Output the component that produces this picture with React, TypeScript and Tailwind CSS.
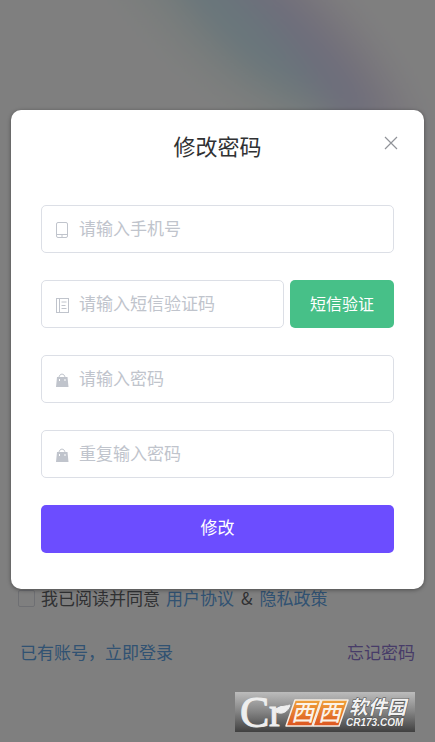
import type { ReactNode } from "react";

const PhoneIcon = () => (
  <svg width="14" height="18" viewBox="0 0 14 18" fill="none" stroke="currentColor">
    <rect x="1.5" y="1.5" width="11" height="15" rx="1.5" />
    <path d="M1.5 13.5h11M7 13.5v3" />
  </svg>
);

const NotebookIcon = () => (
  <svg width="14" height="18" viewBox="0 0 14 18" fill="none" stroke="currentColor">
    <rect x="1.5" y="2.5" width="12" height="14" />
    <path d="M4.5 2.5v14M6.5 6h5M6.5 9.5h4M6.5 12.5h5" />
  </svg>
);

const BagIcon = () => (
  <svg width="14" height="18" viewBox="0 0 14 18" fill="none">
    <path d="M4 7C4 1.8 10 1.8 10 7" stroke="currentColor" />
    <path
      fillRule="evenodd"
      d="M2 6h10.5l1 10H1zM4 8v2h1V8zM9.500 8v2h1V8z"
      fill="currentColor"
    />
  </svg>
);

// Text box with a leading icon
const Field = ({
  label,
  type = "text",
  icon,
}: {
  label: string;
  type?: string;
  icon: ReactNode;
}) => (
  <label className="flex h-12 w-full min-w-0 items-center gap-2.5 rounded-[5px] border border-[#dcdfe6] bg-white px-[13px] text-[#c0c4cc]">
    <span className="pt-0.5">{icon}</span>
    <input
      type={type}
      aria-label={label}
      placeholder={label}
      className="h-full min-w-0 flex-1 bg-transparent pb-1 text-[17px] text-[#606266] outline-none placeholder:text-[#c0c4cc]"
    />
  </label>
);

// Soft coloured band in the top corner of the login page
const Glow = () => (
  <svg
    className="absolute top-0 right-0"
    width="435"
    height="300"
    viewBox="0 0 435 300"
    fill="none"
    aria-hidden="true"
  >
    <defs>
      <filter id="glow" x="-50%" y="-50%" width="200%" height="200%">
        <feGaussianBlur stdDeviation="17" />
      </filter>
    </defs>
    <g filter="url(#glow)">
      <path d="M110 -60C190 20 230 100 350 110" stroke="#f2faf8" strokeWidth="50" />
      <path d="M160 -70C220 10 250 60 340 90" stroke="#d2ecf6" strokeWidth="50" />
      <path d="M215 -70C275 0 325 40 365 130" stroke="#dadaf6" strokeWidth="46" />
      <path d="M250 -60C320 10 370 50 405 140" stroke="#f0e8f6" strokeWidth="28" />
    </g>
  </svg>
);

const Watermark = () => (
  <svg
    className="absolute right-5 bottom-2.5 overflow-visible"
    width="180"
    height="40"
    viewBox="0 0 180 40"
    role="img"
    aria-label="西西软件园 CR173.COM"
  >
    <defs>
      <linearGradient id="plate" x1="0" y1="0" x2="0" y2="1">
        <stop offset="0" stopColor="#bcbcbc" />
        <stop offset="0.5" stopColor="#838383" />
        <stop offset="1" stopColor="#404040" />
      </linearGradient>
      <linearGradient id="tile" x1="0" y1="0" x2="0" y2="1">
        <stop offset="0" stopColor="#f0a33a" />
        <stop offset="1" stopColor="#dc5420" />
      </linearGradient>
    </defs>
    <rect width="180" height="40" fill="url(#plate)" />
    <g fill="#eeeeee" stroke="#eeeeee" strokeWidth="1">
      <text x="5" y="35" fontSize="44" fontFamily="'Liberation Serif', serif">
        C
      </text>
      <text x="34" y="34" fontSize="42" fontFamily="'Liberation Serif', serif">
        r
      </text>
      <path d="M41 20C42 14 48 15 55 13C53 20 47 23 41 20z" />
    </g>
    <g fill="url(#tile)" stroke="#f5eee6" strokeWidth="1.5" strokeLinejoin="round">
      <path d="M60 8H86L77 34H51z" />
      <path d="M87 8H113L104 34H78z" />
    </g>
    <text
      fill="#fbf3e8"
      fontSize="23"
      fontWeight="500"
      fontStyle="italic"
      fontFamily="'Noto Sans CJK SC', sans-serif"
      y="29"
    >
      <tspan x="56">西</tspan>
      <tspan x="83">西</tspan>
    </text>
    <g
      fill="#f2f2f2"
      stroke="#4c4c4c"
      strokeWidth="1"
      paintOrder="stroke"
      fontStyle="italic"
      fontWeight="700"
    >
      <text x="114" y="22" fontSize="19" fontFamily="'Noto Sans CJK SC', sans-serif">
        软件园
      </text>
      <text x="111" y="34" fontSize="10" fontFamily="'Liberation Sans', sans-serif">
        CR173.COM
      </text>
    </g>
  </svg>
);

const LoginFooter = () => (
  <div className="relative flex flex-col gap-[30px] px-5 pb-[78px] text-[17px] leading-6 text-[#606266]">
    <div className="-ml-0.5 flex items-center">
      <label className="flex items-center gap-1.5">
        <input
          type="checkbox"
          className="size-[17px] appearance-none rounded-xs border border-[#dcdfe6]"
        />
        我已阅读并同意
      </label>
      <a href="#terms" className="ml-1.5 text-[#62a4e4]">
        用户协议
      </a>
      <span className="mx-[7px]">&amp;</span>
      <a href="#privacy" className="text-[#62a4e4]">
        隐私政策
      </a>
    </div>
    <div className="flex justify-between">
      <a href="#login" className="text-[#62a4e4]">
        已有账号，立即登录
      </a>
      <a href="#forgot" className="text-[#8f78d0]">
        忘记密码
      </a>
    </div>
  </div>
);

const PasswordDialog = () => (
  <div
    role="dialog"
    aria-labelledby="dialog-title"
    className="rounded-[10px] bg-white px-[30px] pt-5 pb-9 shadow-[0_1px_4px_rgba(0,0,0,0.4)]"
  >
    <header className="relative mb-11 text-center">
      <h1 id="dialog-title" className="text-[22px] leading-[31px] text-[#303133]">
        修改密码
      </h1>
      <button type="button" aria-label="关闭" className="absolute top-1 -right-1.5 p-0.5">
        <svg width="14" height="14" viewBox="0 0 14 14" stroke="#909399" strokeWidth="1.2">
          <path d="M1 1l12 12M13 1L1 13" />
        </svg>
      </button>
    </header>
    <form className="flex flex-col gap-[27px]">
      <Field label="请输入手机号" type="tel" icon={<PhoneIcon />} />
      <div className="flex gap-1.5">
        <Field label="请输入短信验证码" icon={<NotebookIcon />} />
        <button
          type="button"
          className="w-26 shrink-0 rounded-[5px] bg-[#47c088] pb-0.5 text-base text-white"
        >
          短信验证
        </button>
      </div>
      <Field label="请输入密码" type="password" icon={<BagIcon />} />
      <Field label="重复输入密码" type="password" icon={<BagIcon />} />
      <button
        type="button"
        className="h-12 rounded-[5px] bg-[#6c4dff] pb-1 text-[17px] text-white"
      >
        修改
      </button>
    </form>
  </div>
);

export default function App() {
  return (
    <div className="relative flex min-h-screen flex-col justify-end overflow-hidden bg-white font-['Noto_Sans_CJK_SC',sans-serif]">
      <Glow />
      <LoginFooter />
      <div className="absolute inset-0 bg-black/50 px-[11px] pt-[110px]">
        <PasswordDialog />
      </div>
      <Watermark />
    </div>
  );
}
